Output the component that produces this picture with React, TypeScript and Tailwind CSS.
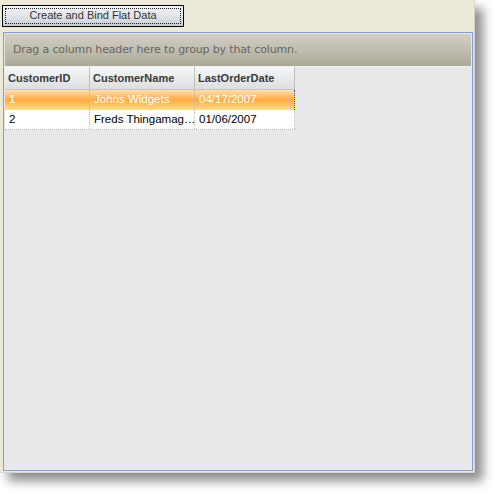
import React from 'react';

const rows = [
	{ id: '1', name: 'Johns Widgets', date: '04/17/2007', selected: true },
	{ id: '2', name: 'Freds Thingamag…', date: '01/06/2007', selected: false },
];

const cols = [
	{ label: 'CustomerID', w: 'w-[85px]' },
	{ label: 'CustomerName', w: 'w-[105px]' },
	{ label: 'LastOrderDate', w: 'w-[100px]' },
];

export default function App() {
	return (
		<div className="w-[495px] h-[494px] bg-white">
			<div className="w-[475px] h-[473px] bg-[#ECE9D8] border-r border-b border-[#D8D5CA] shadow-[8px_8px_10px_rgba(0,0,0,0.45)] flex flex-col font-['DejaVu_Sans',sans-serif]">
				{/* toolbar button */}
				<div className="pt-[2px] pl-[2px] h-[32px]">
					<button className="w-[182px] h-[22px] border border-black bg-gradient-to-b from-[#F2F4F6] via-[#E2E6EA] to-[#C6CDD5] p-[2px] text-[11px] text-[#333] font-['Liberation_Sans',sans-serif]">
						<div className="w-full h-full border border-dotted border-[#222] flex items-center justify-center leading-none">
							Create and Bind Flat Data
						</div>
					</button>
				</div>

				{/* grid */}
				<div className="ml-[3px] w-[470px] h-[439px] border border-[#7F9DDB] p-px bg-[#E8E8E8] flex flex-col">
					<div className="h-[33px] bg-gradient-to-b from-[#D3CFC5] to-[#ADA999] flex items-center pl-[8px] text-[11px] tracking-[-0.15px] text-[#666] border-b border-[#F2F1ED]">
						Drag a column header here to group by that column.
					</div>
					<div className="flex h-[23px] w-fit border-b border-[#C4C4C4] font-['Liberation_Sans',sans-serif]">
						{cols.map((c) => (
							<div
								key={c.label}
								className={`${c.w} bg-gradient-to-b from-[#F6F7F8] to-[#DCDEE0] border-r border-[#BDBDBD] flex items-center pl-[3px] text-[11px] font-bold text-[#3A3A3A]`}
							>
								{c.label}
							</div>
						))}
					</div>
					{rows.map((r) => (
						<div
							key={r.id}
							className={`flex h-[20px] w-[290px] font-['Liberation_Sans',sans-serif] text-[11.5px] ${
								r.selected
									? 'bg-gradient-to-b from-[#FFE0B0] via-[#FFAA40] to-[#FFDD8A] text-white'
									: 'bg-white text-black border-b border-dotted border-[#B8B8B8]'
							}`}
						>
							<div className="w-[85px] pl-[4px] flex items-center border-r border-dotted border-[#B8B8B8]">{r.id}</div>
							<div className="w-[105px] pl-[4px] flex items-center border-r border-dotted border-[#B8B8B8] whitespace-nowrap">{r.name}</div>
							<div className={`w-[100px] pl-[4px] flex items-center border-r border-dotted ${r.selected ? 'border-[#3050C0]' : 'border-[#B8B8B8]'}`}>{r.date}</div>
						</div>
					))}
				</div>
			</div>
		</div>
	);
}
